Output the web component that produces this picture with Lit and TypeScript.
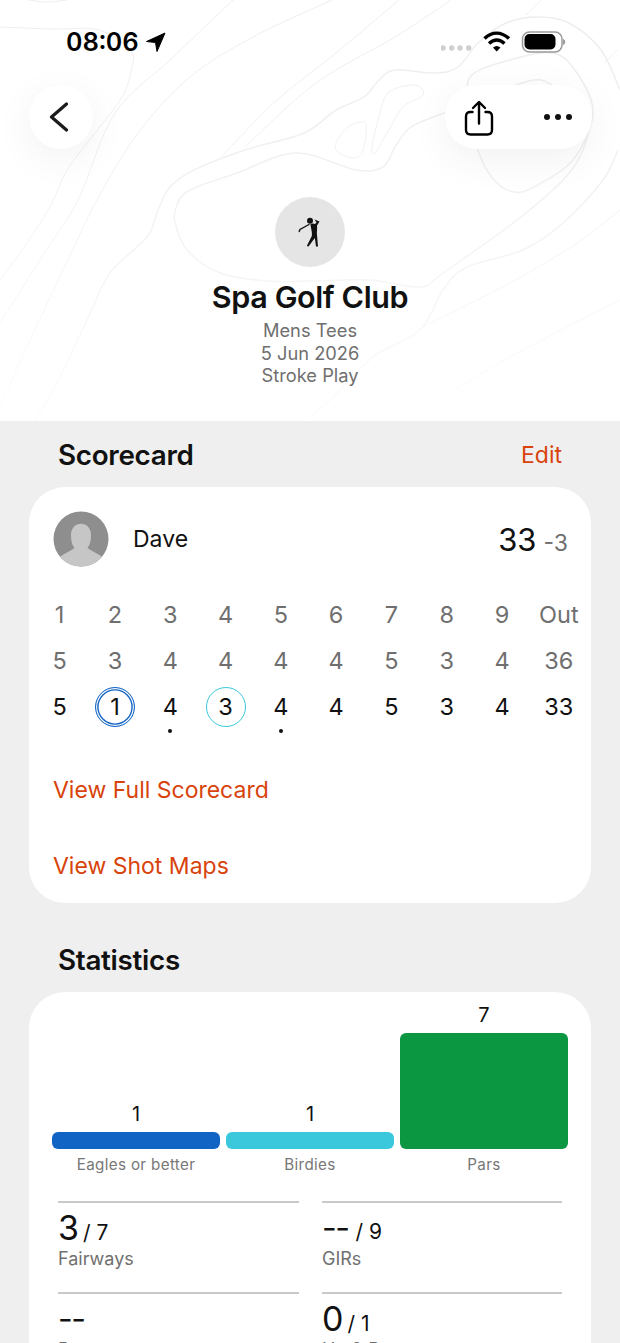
import { LitElement, html, css, svg } from "lit";
import { customElement } from "lit/decorators.js";

type P = [number, number];

function smooth(pts: P[], closed = false): string {
  const n = pts.length;
  const at = (i: number): P => (closed ? pts[(i + n) % n] : pts[Math.max(0, Math.min(n - 1, i))]);
  let d = `M${pts[0][0]} ${pts[0][1]}`;
  const end = closed ? n : n - 1;
  for (let i = 0; i < end; i++) {
    const p0 = at(i - 1), p1 = at(i), p2 = at(i + 1), p3 = at(i + 2);
    const c1x = p1[0] + (p2[0] - p0[0]) / 6, c1y = p1[1] + (p2[1] - p0[1]) / 6;
    const c2x = p2[0] - (p3[0] - p1[0]) / 6, c2y = p2[1] - (p3[1] - p1[1]) / 6;
    d += ` C${c1x.toFixed(1)} ${c1y.toFixed(1)} ${c2x.toFixed(1)} ${c2y.toFixed(1)} ${p2[0]} ${p2[1]}`;
  }
  return closed ? d + "Z" : d;
}

const thin: P[][] = [
  [[28, 0], [47, 2], [67, 0]],
  [[0, 27], [51, 29], [99, 30], [130, 50], [132, 67], [122, 97], [95, 133], [67, 170], [50, 207], [22, 250], [0, 280]],
  [[233, 0], [170, 60], [115, 113], [78, 200], [47, 249], [0, 323]],
  [[332, 0], [253, 37], [190, 77], [138, 133], [97, 200], [73, 249], [30, 340], [0, 407]],
  [[399, 0], [336, 53], [277, 100], [221, 157]],
  [[451, 0], [395, 37], [316, 83], [245, 147]],
  [[541, 0], [526, 15]],
  [[617, 50], [605, 63]],
  [[336, 143], [348, 127], [364, 122], [366, 133], [362, 153], [352, 158], [338, 152]],
  [[372, 147], [380, 113], [389, 92], [415, 85], [423, 95], [403, 107], [387, 133], [375, 153]],
  [[423, 327], [510, 283], [577, 243], [620, 210]],
  [[427, 407], [510, 357], [620, 300]],
];

const thick: P[][] = [
  [[35, 421], [60, 377], [87, 320], [110, 273], [147, 237], [158, 210], [170, 187], [194, 170], [245, 150], [304, 133], [336, 110], [364, 97], [379, 80], [395, 70], [435, 73], [458, 67], [478, 43], [506, 23], [538, 17], [569, 23], [601, 50], [620, 90]],
  [[447, 112], [411, 127], [395, 147], [383, 167], [356, 170], [296, 153], [237, 173], [190, 190], [177, 205], [175, 222], [187, 250], [220, 273], [267, 281], [310, 281], [370, 280], [420, 287], [443, 273], [517, 220], [563, 180], [583, 150], [593, 113]],
  [[310, 417], [333, 397], [373, 357], [420, 330], [443, 290], [467, 267], [523, 250], [563, 223], [603, 180], [618, 150]],
  [[470, 77], [510, 60], [553, 53], [577, 73], [593, 113], [573, 160], [534, 187], [514, 192], [494, 180], [478, 150], [472, 110]],
  [[510, 87], [541, 80], [569, 97]],
];

const topo = svg`
<defs>
  <linearGradient id="fade" gradientUnits="userSpaceOnUse" x1="0" y1="0" x2="0" y2="421">
    <stop offset="0" stop-color="#ededed"/>
    <stop offset="0.4" stop-color="#f1f1f1"/>
    <stop offset="0.7" stop-color="#f6f6f6"/>
    <stop offset="1" stop-color="#fcfcfc"/>
  </linearGradient>
</defs>
<g fill="none" stroke="url(#fade)">
  ${thin.map((p, i) => svg`<path stroke-width="1" d="${smooth(p, i === 8 || i === 9)}"/>`)}
  ${thick.map((p, i) => svg`<path stroke-width="1.5" d="${smooth(p, i === 3)}"/>`)}
</g>`;

@customElement("app-root")
export class AppRoot extends LitElement {
  static styles = css`
    :host { display: block; height: 1343px; overflow: hidden; background: #efefef; color: #111; font-family: Inter, "Noto Sans", sans-serif; }
    .hero { position: relative; height: 421px; background: #fff; overflow: hidden; display: flex; flex-direction: column; align-items: center; }
    .topo { position: absolute; left: 0; top: 0; width: 620px; height: 421px; }
    .status { position: relative; align-self: stretch; height: 85px; box-sizing: border-box; padding: 27px 54px 0 66px; display: flex; justify-content: space-between; align-items: flex-start; }
    .time { display: flex; align-items: center; gap: 6px; font-size: 25.5px; font-weight: 600; line-height: 30px; color: #000; font-variant-numeric: tabular-nums; }
    .status-right { display: flex; align-items: center; padding-top: 2px; }
    .nav { position: relative; align-self: stretch; height: 64px; padding: 0 28px 0 29px; display: flex; justify-content: space-between; }
    .btn { background: #fff; border-radius: 32px; height: 64px; display: flex; align-items: center; box-shadow: 0 10px 40px rgba(0,0,0,.06); }
    .back { width: 64px; justify-content: center; padding-right: 5px; box-sizing: border-box; }
    .actions { width: 147px; box-sizing: border-box; justify-content: space-between; padding: 0 19px; }
    .share { margin-top: 2px; }
    .logo { position: relative; margin-top: 48px; width: 70px; height: 70px; border-radius: 50%; background: #e5e5e5; display: flex; align-items: center; justify-content: center; }
    .club { position: relative; margin: 12px 0 0; font-size: 30.5px; line-height: 36px; font-weight: 600; letter-spacing: -0.4px; }
    .meta { position: relative; margin-top: 4px; font-size: 18.3px; line-height: 22.5px; color: #6f6f6f; text-align: center; }
    .sec-head { display: flex; justify-content: space-between; align-items: center; padding: 2px 58px 0; height: 66px; box-sizing: border-box; }
    .sec-title { font-size: 27.8px; font-weight: 600; letter-spacing: -0.3px; line-height: 34px; }
    .edit { font-size: 23px; color: #d8430c; }
    .card { margin: 0 29px; background: #fff; border-radius: 36px; box-sizing: border-box; }
    .score-card { height: 416px; padding: 24px 24px 0; }
    .player { display: flex; align-items: center; height: 56px; }
    .avatar { width: 56px; height: 56px; }
    .name { margin-left: 24px; font-size: 23px; flex: 1; }
    .score { display: flex; align-items: baseline; margin-right: -1px; }
    .total { font-size: 31px; color: #111; }
    .topar { font-size: 23px; color: #6f6f6f; margin-left: 7px; }
    .holes { margin: 24px -21px 0 -21px; display: grid; grid-template-columns: repeat(9, 55.3px) 1fr; grid-auto-rows: 46.3px; align-items: center; justify-items: center; font-size: 23.5px; }
    .hole { color: #6f6f6f; }
    .cell { position: relative; width: 40px; height: 40px; display: flex; align-items: center; justify-content: center; color: #111; box-sizing: border-box; border-radius: 50%; }
    .cell.eagle { border: 1.8px solid #1264c4; box-shadow: inset 0 0 0 1.2px #fff, inset 0 0 0 2.6px #1264c4; }
    .cell.birdie { border: 1.5px solid #3bc8dc; }
    .cell.bogey::after { content: ""; position: absolute; left: 50%; bottom: -6px; margin-left: -2px; width: 4px; height: 4px; border-radius: 50%; background: #111; }
    .link { color: #d8430c; font-size: 23px; line-height: 30px; }
    .links { display: flex; flex-direction: column; gap: 46px; margin-top: 45px; }
    .stat-head { height: 89px; padding-top: 25px; }
    .stats-card { height: 400px; padding: 10px 23px 0 23px; }
    .chart { display: grid; grid-template-columns: repeat(3, 168px); column-gap: 6px; height: 147px; align-items: end; }
    .col { display: flex; flex-direction: column; align-items: center; }
    .val { font-size: 20px; line-height: 24px; margin-bottom: 6px; color: #111; }
    .bar { width: 168px; border-radius: 6px; }
    .labels { display: grid; grid-template-columns: repeat(3, 168px); column-gap: 6px; margin-top: 6px; font-size: 15.2px; line-height: 20px; color: #777; text-align: center; letter-spacing: 0.35px; }
    .grid { display: grid; grid-template-columns: 241px 240px; column-gap: 23px; margin: 26px 0 0 6px; }
    .metric { border-top: 2px solid #c9c9c9; height: 91px; box-sizing: border-box; padding-top: 5px; }
    .value { display: flex; align-items: baseline; height: 40px; }
    .num { font-size: 34px; line-height: 40px; color: #111; }
    .num.dash { font-size: 32px; letter-spacing: -1.5px; margin-right: 3px; }
    .den { font-size: 21px; color: #111; margin-left: 4px; }
    .mlab { font-size: 18px; line-height: 20px; color: #707070; margin-top: 1px; }
  `;

  render() {
    const par = [5, 3, 4, 4, 4, 4, 5, 3, 4];
    const score = [5, 1, 4, 3, 4, 4, 5, 3, 4];
    const dots = new Set([2, 4]);
    const cls = (i: number) => (dots.has(i) ? "bogey" : score[i] - par[i] <= -2 ? "eagle" : score[i] - par[i] === -1 ? "birdie" : "");
    return html`
      <div class="hero">
        <svg class="topo" viewBox="0 0 620 421">${topo}</svg>
        <div class="status">
          <div class="time">08:06
            <svg width="21" height="21" viewBox="0 0 21 21"><path d="M20 1 L1.5 9.5 L10.5 10.5 L12 19.5 Z" fill="#000" stroke="#000" stroke-width="1" stroke-linejoin="round"/></svg>
          </div>
          <div class="status-right">
            <svg width="125" height="24" viewBox="0 0 125 24">
              <g fill="#cfcfcf"><circle cx="2" cy="19" r="2.7"/><circle cx="10.7" cy="19" r="2.7"/><circle cx="19" cy="19" r="2.7"/><circle cx="27.7" cy="19" r="2.7"/></g>
              <g fill="none" stroke="#000" stroke-width="3.4"><path d="M43.5 9.5 C51 2.5 60 2.5 68 9.5"/><path d="M48 14.5 C53 10 58.5 10 63.5 14.5"/></g>
              <path d="M52 18.5 C54.5 16.5 57 16.5 59.5 18.5 L55.7 22.5Z" fill="#000"/>
              <rect x="81.5" y="3" width="39.5" height="20" rx="7" fill="none" stroke="#9a9a9a" stroke-width="1.5"/>
              <rect x="83.5" y="5" width="31" height="15.5" rx="5" fill="#000"/>
              <path d="M122 10 C125 11 125 15 122 16Z" fill="#9a9a9a"/>
            </svg>
          </div>
        </div>
        <div class="nav">
          <div class="btn back">
            <svg width="20" height="30" viewBox="0 0 20 30"><path d="M17.5 2 L2.5 15 L17.5 28" fill="none" stroke="#1a1a1a" stroke-width="3.2" stroke-linecap="round" stroke-linejoin="round"/></svg>
          </div>
          <div class="btn actions">
            <svg class="share" width="30" height="36" viewBox="0 0 30 36" fill="none" stroke="#000" stroke-width="2.4" stroke-linecap="round" stroke-linejoin="round">
              <path d="M8.5 12 H6.5 Q2 12 2 16.5 V30 Q2 34.5 6.5 34.5 H23.5 Q28 34.5 28 30 V16.5 Q28 12 23.5 12 H21.5"/>
              <path d="M15 23.5 V2.5 M9 8 L15 2 L21 8"/>
            </svg>
            <svg width="30" height="8" viewBox="0 0 30 8" fill="#111"><circle cx="4" cy="4" r="3"/><circle cx="15" cy="4" r="3"/><circle cx="26" cy="4" r="3"/></svg>
          </div>
        </div>
        <div class="logo">
          <svg width="30" height="36" viewBox="0 0 30 36">
            <circle cx="15" cy="6.7" r="3" fill="#111"/>
            <path d="M15.5 10 C17 9.2 18.5 9.2 20 10 L21.5 8.5 L19.5 5.5 L24.5 7.5 L22 11.5 C22.5 15 21.5 18 22 21 L23 32.5 L21 32.5 L19.8 24 L13.5 32.5 L11.8 32 L16.8 22 C17.5 18 15.5 13 15.5 10Z" fill="#111"/>
            <path d="M14 10.5 L5 15.5 L4.2 17.5" fill="none" stroke="#111" stroke-width="1.4" stroke-linecap="round"/>
          </svg>
        </div>
        <h1 class="club">Spa Golf Club</h1>
        <div class="meta">Mens Tees<br />5 Jun 2026<br />Stroke Play</div>
      </div>

      <div class="sec-head"><div class="sec-title">Scorecard</div><div class="edit">Edit</div></div>
      <div class="card score-card">
        <div class="player">
          <svg class="avatar" viewBox="0 0 56 56">
            <defs><clipPath id="av"><circle cx="28" cy="28" r="27.5"/></clipPath></defs>
            <circle cx="28" cy="28" r="27.5" fill="#8e8e8e"/>
            <g clip-path="url(#av)" fill="#c6c6c6">
              <path d="M18 24 C18 9 38 9 38 24 C38 30 37 34 34.5 37 C38 40 44 42 48 45 L56 56 L0 56 L8 45 C12 42 18 40 21.5 37 C19 34 18 30 18 24Z"/>
            </g>
          </svg>
          <div class="name">Dave</div>
          <div class="score"><div class="total">33</div><div class="topar">-3</div></div>
        </div>
        <div class="holes">
          ${[1, 2, 3, 4, 5, 6, 7, 8, 9, "Out"].map((h) => html`<div class="hole">${h}</div>`)}
          ${[...par, 36].map((h) => html`<div class="hole">${h}</div>`)}
          ${score.map((s, i) => html`<div class="cell ${cls(i)}">${s}</div>`)}
          <div class="cell">33</div>
        </div>
        <div class="links"><div class="link">View Full Scorecard</div><div class="link">View Shot Maps</div></div>
      </div>

      <div class="sec-head stat-head"><div class="sec-title">Statistics</div></div>
      <div class="card stats-card">
        <div class="chart">
          <div class="col"><div class="val">1</div><div class="bar" style="height:17px;background:#1264c4"></div></div>
          <div class="col"><div class="val">1</div><div class="bar" style="height:17px;background:#3bc8dc"></div></div>
          <div class="col"><div class="val">7</div><div class="bar" style="height:116px;background:#0b9641"></div></div>
        </div>
        <div class="labels"><div>Eagles or better</div><div>Birdies</div><div>Pars</div></div>
        <div class="grid">
          <div class="metric"><div class="value"><span class="num">3</span><span class="den">/ 7</span></div><div class="mlab">Fairways</div></div>
          <div class="metric"><div class="value"><span class="num dash">--</span><span class="den">/ 9</span></div><div class="mlab">GIRs</div></div>
          <div class="metric"><div class="value"><span class="num dash">--</span></div><div class="mlab">Putts</div></div>
          <div class="metric"><div class="value"><span class="num">0</span><span class="den">/ 1</span></div><div class="mlab">Up &amp; Dn</div></div>
        </div>
      </div>
    `;
  }
}
